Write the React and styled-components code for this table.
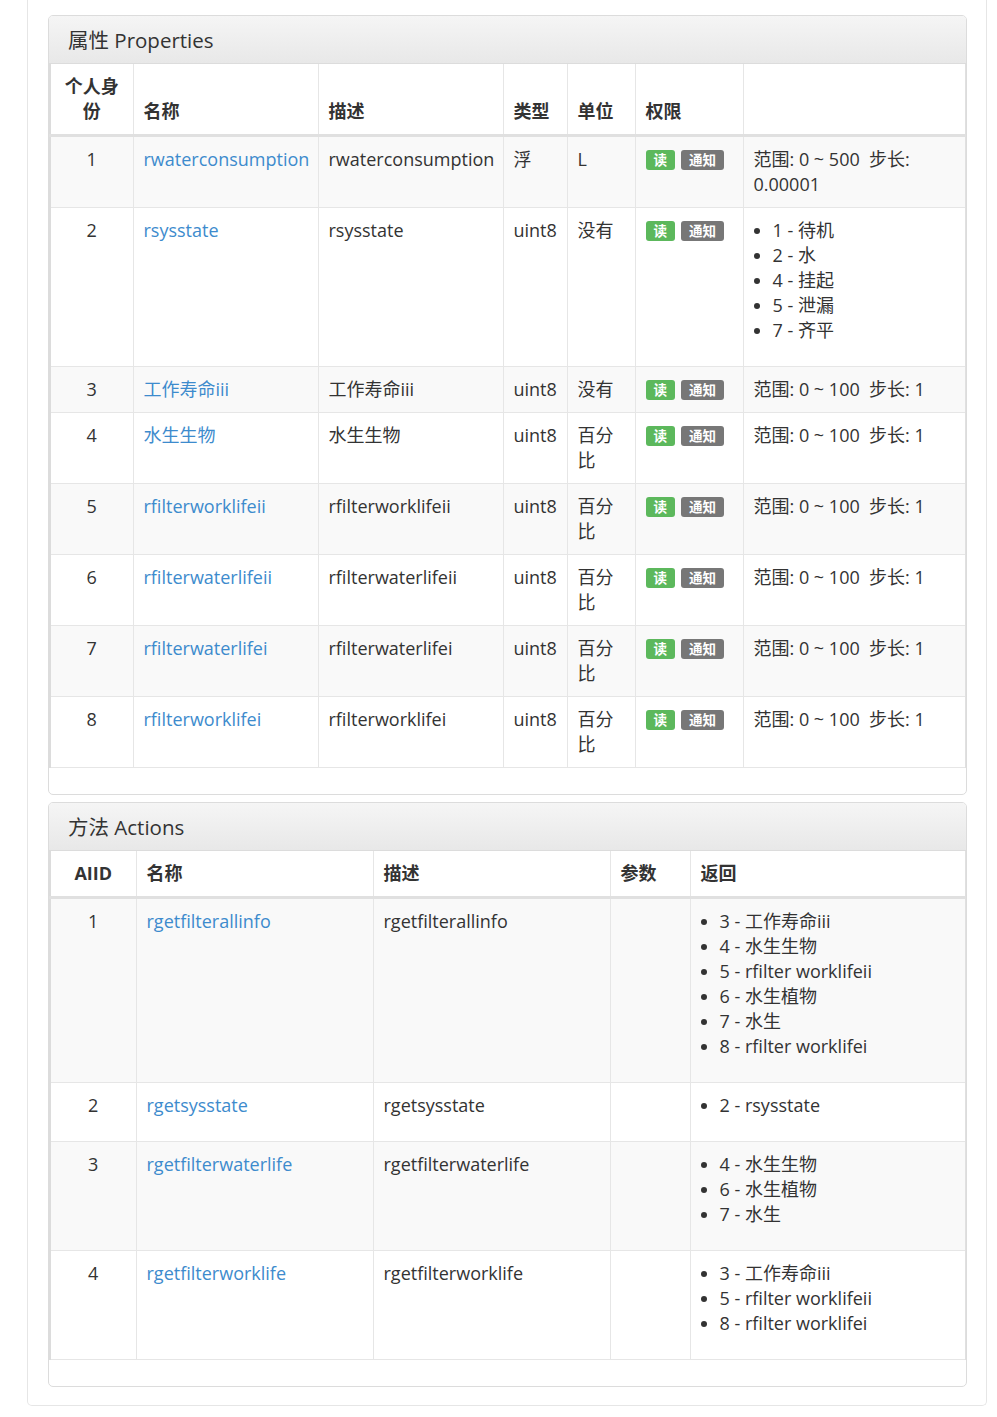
import styled, { createGlobalStyle } from 'styled-components'

const GlobalStyle = createGlobalStyle`
body {
  margin: 0;
  background: #fff;
  font-family: "Open Sans", "Noto Sans CJK SC", sans-serif;
  font-size: 18px;
  line-height: 25px;
  color: #333;
}
`

const Wrapper = styled.div`
width: 960px;
margin-left: 27px;
box-sizing: border-box;
border: 1px solid #e6e6e6;
border-top: none;
border-radius: 0 0 5px 5px;
padding: 15px 19px 18px 20px;
`

const Panel = styled.div`
border: 1px solid #dcdcdc;
border-radius: 5px;
background: #fff;
margin-bottom: ${props => props.gap || 0}px;
padding-bottom: 26px;
overflow: hidden;
`

const Heading = styled.div`
height: 48px;
box-sizing: border-box;
padding: 12px 19px;
font-size: 20.5px;
line-height: 25px;
color: #333;
background-image: linear-gradient(to bottom, #f5f5f5 0%, #e8e8e8 100%);
border-bottom: 1px solid #dcdcdc;
`

const Table = styled.table`
width: 916px;
table-layout: fixed;
border-collapse: collapse;
border-left: 2px solid #dcdcdc;
border-right: 2px solid #e0e0e0;
`

const Th = styled.th`
text-align: ${props => props.center ? 'center' : 'left'};
vertical-align: bottom;
padding: 10px 10px;
font-weight: bold;
border: 1px solid #e6e6e6;
border-top: none;
border-bottom: 3px solid #e0e0e0;
`

const Row = styled.tr`
background: ${props => props.odd ? '#f9f9f9' : '#fff'};
`

const Td = styled.td`
text-align: ${props => props.center ? 'center' : 'left'};
vertical-align: top;
padding: 10px 10px;
border: 1px solid #e6e6e6;
`

const Link = styled.a`
color: #3d8bcd;
text-decoration: none;
`

const Badge = styled.span`
display: inline-block;
vertical-align: 1px;
height: 20px;
line-height: 20px;
padding: 0 8px;
margin-right: 6px;
border-radius: 3px;
color: #fff;
font-size: 13.5px;
font-weight: bold;
background: ${props => props.color};
`

const List = styled.ul`
margin: 0 0 13px 0;
padding-left: 19px;
`

const props = [
  { id: 1, name: 'rwaterconsumption', type: '浮', unit: 'L', range: ['范围: 0 ~ 500\u00a0\u00a0步长: 0.00001'] },
  { id: 2, name: 'rsysstate', type: 'uint8', unit: '没有', list: ['1 - 待机', '2 - 水', '4 - 挂起', '5 - 泄漏', '7 - 齐平'] },
  { id: 3, name: '工作寿命iii', type: 'uint8', unit: '没有', range: ['范围: 0 ~ 100\u00a0\u00a0步长: 1'] },
  { id: 4, name: '水生生物', type: 'uint8', unit: '百分比', range: ['范围: 0 ~ 100\u00a0\u00a0步长: 1'] },
  { id: 5, name: 'rfilterworklifeii', type: 'uint8', unit: '百分比', range: ['范围: 0 ~ 100\u00a0\u00a0步长: 1'] },
  { id: 6, name: 'rfilterwaterlifeii', type: 'uint8', unit: '百分比', range: ['范围: 0 ~ 100\u00a0\u00a0步长: 1'] },
  { id: 7, name: 'rfilterwaterlifei', type: 'uint8', unit: '百分比', range: ['范围: 0 ~ 100\u00a0\u00a0步长: 1'] },
  { id: 8, name: 'rfilterworklifei', type: 'uint8', unit: '百分比', range: ['范围: 0 ~ 100\u00a0\u00a0步长: 1'] },
]

const actions = [
  { id: 1, name: 'rgetfilterallinfo', out: ['3 - 工作寿命iii', '4 - 水生生物', '5 - rfilter worklifeii', '6 - 水生植物', '7 - 水生', '8 - rfilter worklifei'] },
  { id: 2, name: 'rgetsysstate', out: ['2 - rsysstate'] },
  { id: 3, name: 'rgetfilterwaterlife', out: ['4 - 水生生物', '6 - 水生植物', '7 - 水生'] },
  { id: 4, name: 'rgetfilterworklife', out: ['3 - 工作寿命iii', '5 - rfilter worklifeii', '8 - rfilter worklifei'] },
]

const App = () => {
  return (
    <>
      <GlobalStyle />
      <Wrapper>
        <Panel gap={7}>
          <Heading>属性 Properties</Heading>
          <Table>
            <colgroup>
              <col style={{ width: 83 }} />
              <col style={{ width: 185 }} />
              <col style={{ width: 185 }} />
              <col style={{ width: 64 }} />
              <col style={{ width: 68 }} />
              <col style={{ width: 108 }} />
              <col style={{ width: 223 }} />
            </colgroup>
            <thead>
              <tr>
                <Th center>个人身份</Th>
                <Th>名称</Th>
                <Th>描述</Th>
                <Th>类型</Th>
                <Th>单位</Th>
                <Th>权限</Th>
                <Th></Th>
              </tr>
            </thead>
            <tbody>
              {props.map((p, i) => (
                <Row key={p.id} odd={i % 2 === 0}>
                  <Td center>{p.id}</Td>
                  <Td><Link href="#">{p.name}</Link></Td>
                  <Td>{p.name}</Td>
                  <Td>{p.type}</Td>
                  <Td>{p.unit}</Td>
                  <Td>
                    <Badge color="#5cb85c">读</Badge>
                    <Badge color="#777">通知</Badge>
                  </Td>
                  <Td>
                    {p.range && p.range[0]}
                    {p.list && (
                      <List>
                        {p.list.map(x => <li key={x}>{x}</li>)}
                      </List>
                    )}
                  </Td>
                </Row>
              ))}
            </tbody>
          </Table>
        </Panel>

        <Panel>
          <Heading>方法 Actions</Heading>
          <Table>
            <colgroup>
              <col style={{ width: 86 }} />
              <col style={{ width: 237 }} />
              <col style={{ width: 237 }} />
              <col style={{ width: 80 }} />
              <col style={{ width: 276 }} />
            </colgroup>
            <thead>
              <tr>
                <Th center>AIID</Th>
                <Th>名称</Th>
                <Th>描述</Th>
                <Th>参数</Th>
                <Th>返回</Th>
              </tr>
            </thead>
            <tbody>
              {actions.map((a, i) => (
                <Row key={a.id} odd={i % 2 === 0}>
                  <Td center>{a.id}</Td>
                  <Td><Link href="#">{a.name}</Link></Td>
                  <Td>{a.name}</Td>
                  <Td></Td>
                  <Td>
                    <List>
                      {a.out.map(x => <li key={x}>{x}</li>)}
                    </List>
                  </Td>
                </Row>
              ))}
            </tbody>
          </Table>
        </Panel>
      </Wrapper>
    </>
  )
}

export default App
